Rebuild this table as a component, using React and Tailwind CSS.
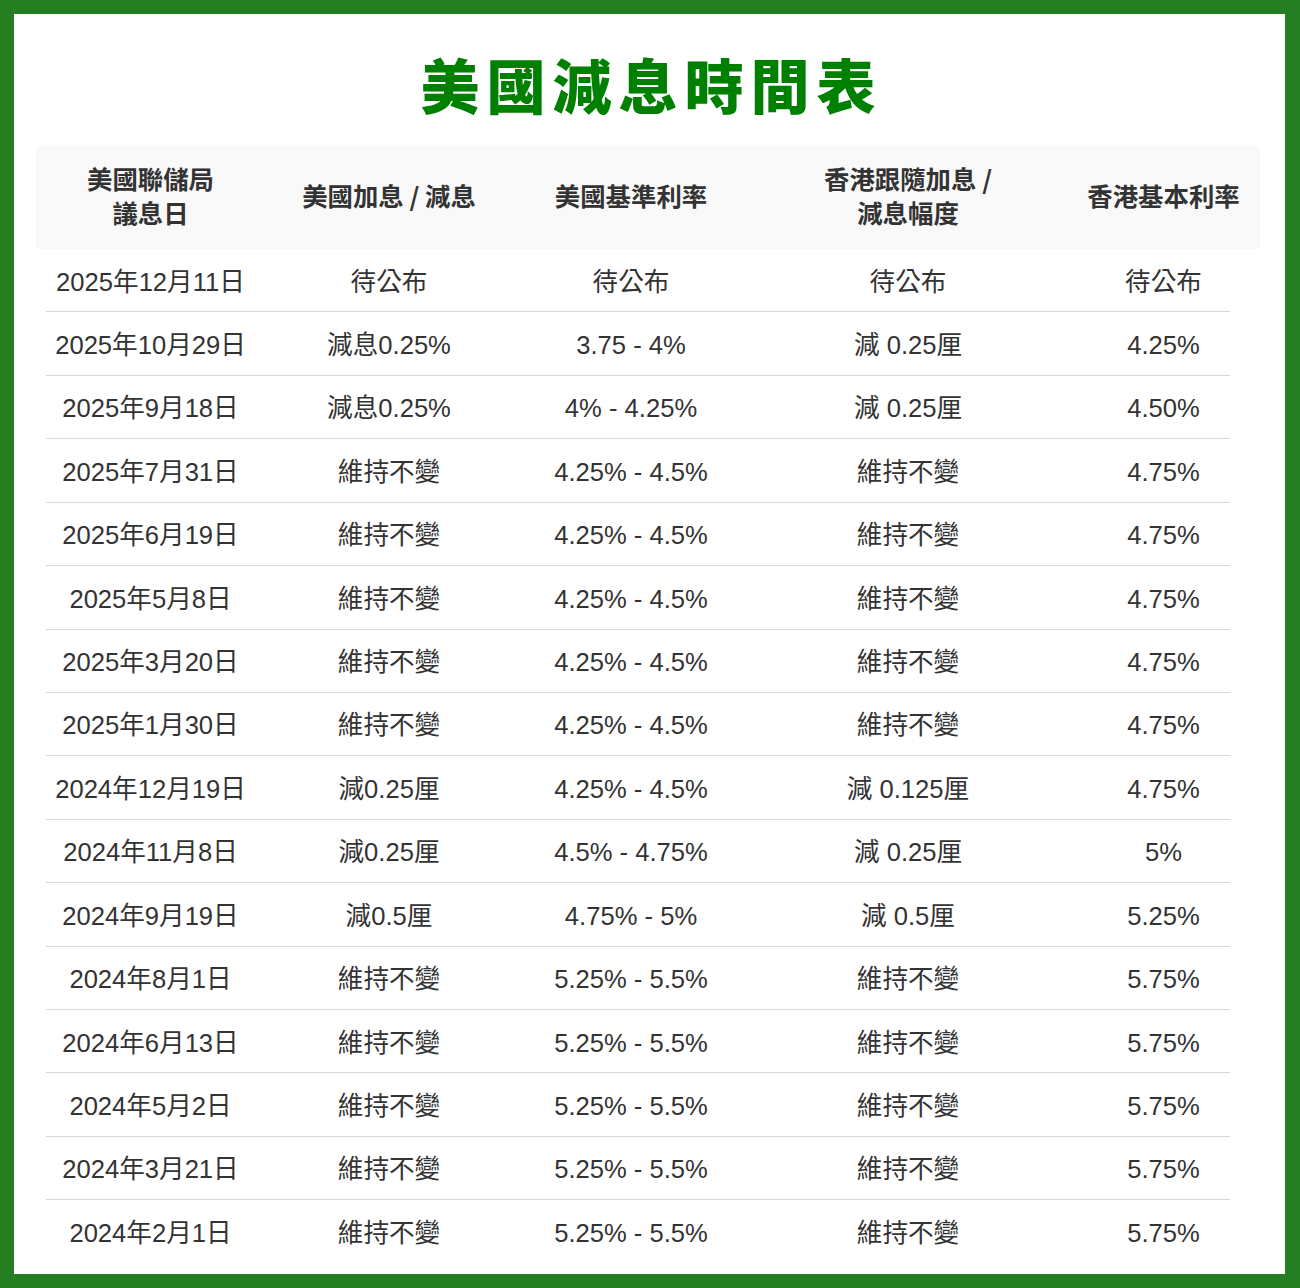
import React from "react";

const rows = [
  ["2025年12月11日", "待公布", "待公布", "待公布", "待公布"],
  ["2025年10月29日", "減息0.25%", "3.75 - 4%", "減 0.25厘", "4.25%"],
  ["2025年9月18日", "減息0.25%", "4% - 4.25%", "減 0.25厘", "4.50%"],
  ["2025年7月31日", "維持不變", "4.25% - 4.5%", "維持不變", "4.75%"],
  ["2025年6月19日", "維持不變", "4.25% - 4.5%", "維持不變", "4.75%"],
  ["2025年5月8日", "維持不變", "4.25% - 4.5%", "維持不變", "4.75%"],
  ["2025年3月20日", "維持不變", "4.25% - 4.5%", "維持不變", "4.75%"],
  ["2025年1月30日", "維持不變", "4.25% - 4.5%", "維持不變", "4.75%"],
  ["2024年12月19日", "減0.25厘", "4.25% - 4.5%", "減 0.125厘", "4.75%"],
  ["2024年11月8日", "減0.25厘", "4.5% - 4.75%", "減 0.25厘", "5%"],
  ["2024年9月19日", "減0.5厘", "4.75% - 5%", "減 0.5厘", "5.25%"],
  ["2024年8月1日", "維持不變", "5.25% - 5.5%", "維持不變", "5.75%"],
  ["2024年6月13日", "維持不變", "5.25% - 5.5%", "維持不變", "5.75%"],
  ["2024年5月2日", "維持不變", "5.25% - 5.5%", "維持不變", "5.75%"],
  ["2024年3月21日", "維持不變", "5.25% - 5.5%", "維持不變", "5.75%"],
  ["2024年2月1日", "維持不變", "5.25% - 5.5%", "維持不變", "5.75%"],
];

// column widths measured off the header band
const cols = "grid grid-cols-[229px_248px_236px_318px_193px]";

export default function App() {
  return (
    <div
      className="w-[1300px] h-[1288px] bg-[#257f22] pt-[14px] pl-[14px] pr-[15px] pb-[14px]"
      style={{ fontFamily: '"Liberation Sans", "Noto Sans CJK TC", sans-serif' }}
    >
      <div className="h-full bg-white pl-[22px] pr-[25px]">
        {/* title */}
        <h1 className="h-[132px] pt-[37px] pl-[7px] text-center text-[59px] leading-[66px] font-black tracking-[7px] text-[#008000] font-['Noto_Sans_CJK_TC',sans-serif]">
          美國減息時間表
        </h1>

        {/* header */}
        <div className={`${cols} h-[103px] pb-[6px] bg-[#f9f9f9] items-center text-center text-[25.4px] leading-[34px] font-semibold text-[#333] font-['Noto_Sans_CJK_TC',sans-serif]`}>
          <div>美國聯儲局<br />議息日</div>
          <div>美國加息 / 減息</div>
          <div>美國基準利率</div>
          <div>香港跟隨加息 /<br />減息幅度</div>
          <div>香港基本利率</div>
        </div>

        {/* body */}
        <div>
          {rows.map((r, i) => (
            <div key={i} className="h-[63.43px] flex flex-col">
              <div className={`${cols} flex-1 items-center text-center text-[25.6px] text-[#333] pt-[3px]`}>
                {r.map((c, j) => (
                  <div key={j}>{c}</div>
                ))}
              </div>
              {i < rows.length - 1 && (
                <div className="ml-[10px] mr-[30px] h-px bg-[#d6d6d6]" />
              )}
            </div>
          ))}
        </div>
      </div>
    </div>
  );
}
